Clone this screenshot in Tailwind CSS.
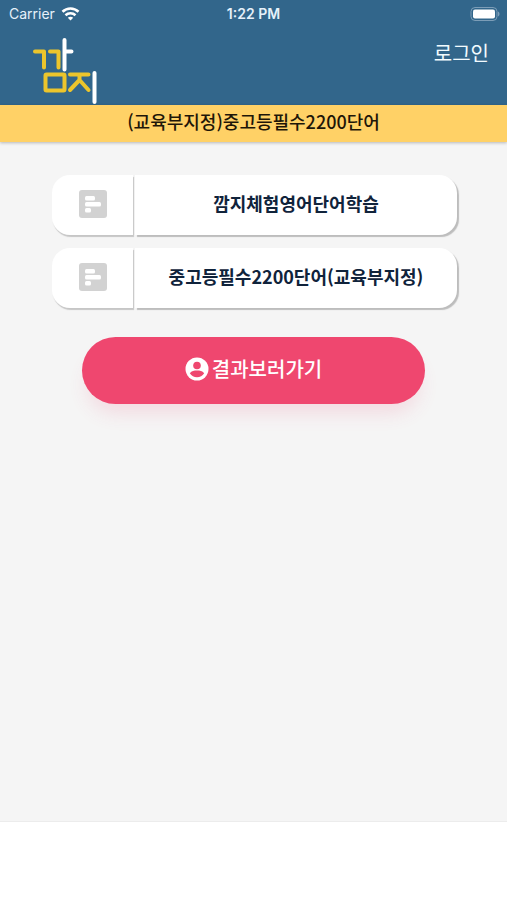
<!DOCTYPE html>
<html lang="ko">
<head>
<meta charset="utf-8">
<meta name="viewport" content="width=device-width, initial-scale=1">
<title>깜지</title>
<script src="https://cdn.jsdelivr.net/npm/@tailwindcss/browser@4"></script>
</head>
<body class="flex min-h-screen flex-col bg-white font-['Noto_Sans_CJK_KR',sans-serif]">
<header class="bg-[#32668b] text-white">
  <div class="grid h-7 grid-cols-3 items-center px-[7px] font-['Inter','Noto_Sans_CJK_KR',sans-serif] text-sm text-[#e6f1fa]">
    <div class="flex items-center gap-[6px] pl-[2px]">
      <span>Carrier</span>
      <svg class="h-[14px] w-[19px]" viewBox="0 0 18 14" fill="none" stroke="#fff" stroke-width="2.6" aria-hidden="true">
        <path d="M1 4.700C5.600.4 12.400.4 17 4.700"/>
        <path d="M4 8.200C6.800 5.600 11.200 5.600 14 8.200"/>
        <path d="M9 13.500 6.300 10.800C7.800 9.500 10.200 9.500 11.700 10.800Z" fill="#fff" stroke="none"/>
      </svg>
    </div>
    <span class="text-center font-semibold">1:22 PM</span>
    <svg class="h-[14px] w-[30px] justify-self-end" viewBox="0 0 30 14" aria-hidden="true">
      <rect x="1" y=".5" width="26" height="13" rx="4" fill="none" stroke="#7c9db7"/>
      <rect x="3" y="2.500" width="22" height="9" rx="2" fill="#fff"/>
      <path d="M28 4.500c2 .8 2 4.200 0 5z" fill="#7c9db7"/>
    </svg>
  </div>
  <div class="flex items-start justify-between pr-[18px] pb-px pl-8">
    <a href="#" aria-label="깜지" class="pt-2">
      <svg class="h-[68px] w-[68px]" viewBox="0 0 68 68" fill="none" stroke-width="4" stroke-linecap="round" stroke-linejoin="round" aria-hidden="true">
        <g stroke="#ecc52c">
          <path d="M3 15.500h9v16M18 15.500h8.500v16"/>
          <rect x="13.500" y="38.500" width="19" height="16" rx="1"/>
          <path d="M38 38.500h18.500M47.500 39.500v4.500L38 54M47.500 44 56.500 54"/>
        </g>
        <g stroke="#fff">
          <path d="M32.500 4v29.500M33 15.500h6.500"/>
          <path d="M62.500 37v29"/>
        </g>
      </svg>
    </a>
    <a href="#" class="pt-[10px] text-xl leading-[30px] text-[#f2fbff]">로그인</a>
  </div>
</header>
<main class="flex-1 border-b border-[#ececec] bg-[#f5f5f5]">
  <h1 class="bg-[#ffd166] pt-[2px] pb-[7px] text-center text-lg leading-7 font-medium text-[#1e1608] shadow-[0_1px_3px_rgba(0,0,0,0.25)]">(교육부지정)중고등필수2200단어</h1>
  <ul class="flex flex-col gap-[13px] pt-[33px] pr-[50px] pl-[52px] text-lg font-bold text-[#10233b]">
    <li>
      <a href="#" class="flex gap-[2px]">
        <span class="flex h-15 w-1/5 items-center justify-center rounded-l-[18px] bg-white pb-[2px] shadow-[1px_2px_1px_#c6c6c6]">
          <svg class="size-7" viewBox="0 0 28 28" aria-hidden="true"><rect width="28" height="28" rx="3" fill="#d2d2d2"/><g fill="#fff"><rect x="6" y="6" width="10" height="4.400" rx="1.500"/><rect x="6" y="12" width="16" height="4.400" rx="1.500"/><rect x="6" y="18" width="6" height="4.400" rx="1.500"/></g></svg>
        </span>
        <span class="flex h-15 flex-1 items-center justify-center rounded-r-[18px] bg-white pb-1 shadow-[2px_2px_1px_#bdbdbd]">깜지체험영어단어학습</span>
      </a>
    </li>
    <li>
      <a href="#" class="flex gap-[2px]">
        <span class="flex h-15 w-1/5 items-center justify-center rounded-l-[18px] bg-white pb-[2px] shadow-[1px_2px_1px_#c6c6c6]">
          <svg class="size-7" viewBox="0 0 28 28" aria-hidden="true"><rect width="28" height="28" rx="3" fill="#d2d2d2"/><g fill="#fff"><rect x="6" y="6" width="10" height="4.400" rx="1.500"/><rect x="6" y="12" width="16" height="4.400" rx="1.500"/><rect x="6" y="18" width="6" height="4.400" rx="1.500"/></g></svg>
        </span>
        <span class="flex h-15 flex-1 items-center justify-center rounded-r-[18px] bg-white pb-1 shadow-[2px_2px_1px_#bdbdbd]">중고등필수2200단어(교육부지정)</span>
      </a>
    </li>
  </ul>
  <div class="px-[82px] pt-[29px]">
    <button type="button" class="flex h-[67px] w-full items-center justify-center gap-[3px] rounded-full bg-[#ef476f] pb-1 text-xl font-medium text-white shadow-[0_14px_20px_-6px_rgba(239,71,111,0.16)]">
      <svg class="size-6" viewBox="0 0 24 24" aria-hidden="true"><circle cx="12" cy="12" r="11.500" fill="#fff"/><circle cx="12" cy="8.500" r="3.800" fill="#ef476f"/><path d="M4.800 16.200C6.600 14 9.200 13.600 12 13.600s5.400.4 7.200 2.600C17.500 18.800 15 20.200 12 20.200s-5.500-1.400-7.200-4z" fill="#ef476f"/></svg>
      결과보러가기
    </button>
  </div>
</main>
<footer class="h-[78px] bg-white"></footer>
</body>
</html>
